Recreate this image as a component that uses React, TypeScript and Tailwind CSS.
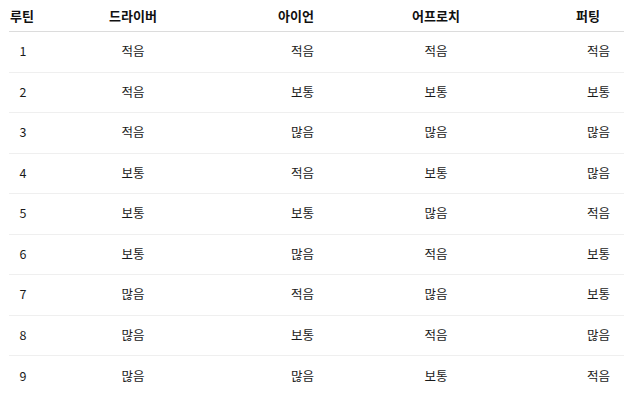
import React from "react";

const rows: [string, string, string, string, string][] = [
  ["1", "적음", "적음", "적음", "적음"],
  ["2", "적음", "보통", "보통", "보통"],
  ["3", "적음", "많음", "많음", "많음"],
  ["4", "보통", "적음", "보통", "많음"],
  ["5", "보통", "보통", "많음", "적음"],
  ["6", "보통", "많음", "적음", "보통"],
  ["7", "많음", "적음", "많음", "보통"],
  ["8", "많음", "보통", "적음", "많음"],
  ["9", "많음", "많음", "보통", "적음"],
];

const cols = "grid grid-cols-[28px_192px_87px_240px_68px]";

export default function App() {
  return (
    <div
      className="w-[624px] h-[404px] bg-white overflow-hidden pl-[9px]"
      style={{ fontFamily: '"Noto Sans CJK KR", "Noto Sans", sans-serif' }}
    >
      <div className="w-[615px]">
        <div className={`${cols} h-[32px] items-center border-b border-[#dcdcdc] text-[13px] font-bold text-[#111]`}>
          <div className="pl-[1px] text-left">루틴</div>
          <div className="text-center">드라이버</div>
          <div className="text-right pr-[2px]">아이언</div>
          <div className="text-center">어프로치</div>
          <div className="text-right pr-[24px]">퍼팅</div>
        </div>
        {rows.map((r, i) => (
          <div
            key={i}
            className={`${cols} h-[40.5px] items-center text-[12.5px] text-[#1a1a1a] ${i < rows.length - 1 ? "border-b border-[#efefef]" : ""}`}
          >
            <div className="text-center">{r[0]}</div>
            <div className="text-center">{r[1]}</div>
            <div className="text-right pr-[2px]">{r[2]}</div>
            <div className="text-center">{r[3]}</div>
            <div className="text-right pr-[14px]">{r[4]}</div>
          </div>
        ))}
      </div>
    </div>
  );
}
